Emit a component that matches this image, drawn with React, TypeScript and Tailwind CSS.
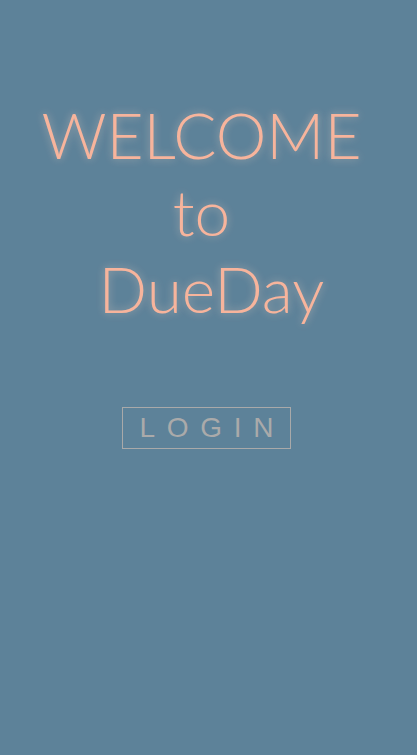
export default function App() {
  return (
    <div className="w-[417px] h-[755px] bg-[#5d8299] flex flex-col items-center">
      <div className="mt-[96px] pr-[14px] flex flex-col items-center font-['Lato','Open_Sans',sans-serif] text-[#f7b49c] text-[64px] leading-[77px] font-light [text-shadow:0_0_8px_rgba(255,220,200,0.45)]">
        <div>WELCOME</div>
        <div>to</div>
        <div className="pl-[20px]">DueDay</div>
      </div>
      <div className="mt-[80px] mr-[4px] w-[169px] h-[42px] border border-[#a9a9a9] flex items-center justify-center font-['Liberation_Sans',Arial,sans-serif] text-[#aaaaaa] text-[28px] tracking-[0.42em] pl-[0.42em]">
        LOGIN
      </div>
    </div>
  );
}
